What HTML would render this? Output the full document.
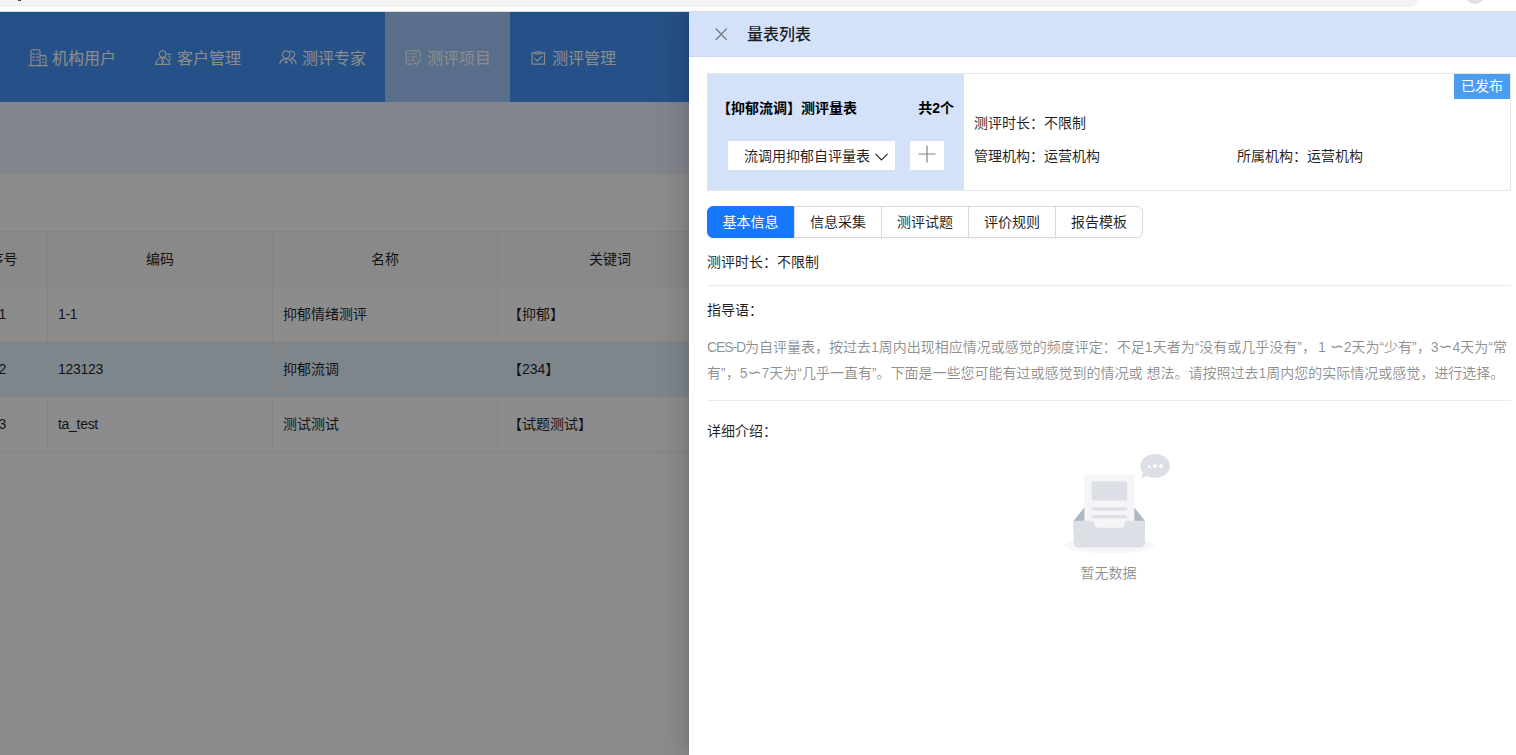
<!DOCTYPE html>
<html lang="zh-CN">
<head>
<meta charset="utf-8">
<title>量表列表</title>
<style>
*{box-sizing:border-box;margin:0;padding:0}
html,body{width:1516px;height:755px;overflow:hidden;background:#fff}
body{position:relative;font-family:"Liberation Sans","Noto Sans CJK SC",sans-serif;font-size:14px;color:rgba(0,0,0,.88)}
.abs{position:absolute}
/* browser chrome strip */
#chrome{left:0;top:0;width:1516px;height:12px;background:#fff;z-index:30;overflow:hidden}
#chrome .ln{left:0;top:11px;width:1516px;height:1px;background:#d9dcdf}
#chrome .pill{left:-20px;top:-21.1px;width:1441.5px;height:28px;background:#f1f3f4;border-radius:14px}
#chrome .ava{left:1464.7px;top:-16.6px;width:20.6px;height:20.6px;border-radius:50%;background:#dee1e6}
#chrome .dot{left:17.5px;top:0;width:3px;height:1px;background:#444}
/* underlying page */
#page{left:0;top:12px;width:1516px;height:743px;background:#fff;z-index:1}
#nav{left:0;top:0;width:1516px;height:90px;background:#4594f8}
.ni{top:0;width:125px;height:90px;color:#fff;font-size:16px;line-height:90px;white-space:nowrap}
.ni.on{background:#a3c9fd}
.ni svg{position:absolute;top:36px}
.ni span{position:absolute;top:2px}
#band{left:0;top:90px;width:1516px;height:72px;background:#eef3ff}
#tbl{left:-41px;top:219px;width:1600px;border-top:1px solid #f0f0f0}
.tr{position:relative;height:55px;border-bottom:1px solid #f0f0f0;width:100%}
.tr.h{background:#fafafa}
.tr.sel{background:#e6f4ff}
.td{position:absolute;top:0;height:54px;line-height:54px;border-left:1px solid #f0f0f0;padding-left:10px;white-space:nowrap;font-size:14px}
.lat{letter-spacing:-.3px}
.tl{font-family:"DejaVu Sans",sans-serif;font-size:16.7px;line-height:1}
.td.n{text-align:center;padding:0 2px 0 0}
.tr.h .td{text-align:center;padding-left:0}
#mask{left:0;top:12px;width:1516px;height:743px;background:rgba(0,0,0,.45);z-index:5}
/* drawer */
#drawer{left:689px;top:12px;width:827px;height:743px;background:#fff;z-index:10;box-shadow:-6px 0 16px 0 rgba(0,0,0,.08),-3px 0 6px -4px rgba(0,0,0,.12),-9px 0 28px 8px rgba(0,0,0,.05)}
#dh{left:0;top:0;width:827px;height:45px;background:#d4e2f9;border-bottom:1px solid #c9d6ec}
#dh .t{left:58px;top:1px;line-height:44px;font-size:16px;font-weight:500;color:rgba(0,0,0,.88)}

#dh .x{left:25.5px;top:15.5px;width:12.5px;height:12.5px}
/* card */
#card{left:18px;top:61px;width:804px;height:118px;background:#fff}
#cr{left:0;top:0;width:804px;height:118px;border:1px solid #e6e6e6}
#cl{left:1px;top:1px;width:256px;height:116px;background:#d4e2f9}
#cl .tt{left:9px;top:23px;font-size:14px;font-weight:700;line-height:22px;white-space:nowrap;color:#000}
#cl .cnt{right:10px;top:23px;font-size:14px;font-weight:700;line-height:22px;white-space:nowrap;color:#000}
#sel{left:20px;top:67px;width:167px;height:29px;background:#fff}
#sel span{position:absolute;left:16px;top:1px;line-height:29px;font-size:14px;white-space:nowrap;color:rgba(0,0,0,.88)}
#sel svg{position:absolute;left:147px;top:11.5px}
#plus{left:202px;top:67px;width:34px;height:29px;background:#fff}
#plus svg{position:absolute;left:8px;top:4px}
.info{font-size:14px;line-height:22px;white-space:nowrap;color:rgba(0,0,0,.88)}
#badge{left:747px;top:1px;width:56px;height:25px;background:#4a9eed;color:#fff;font-size:14px;line-height:25px;text-align:center}
/* tabs */
#tabs{left:18px;top:194px;height:32px;width:436px}
.tb{box-shadow:0 2px 0 rgba(0,0,0,.02)}
.tb{top:0;width:88px;height:32px;border:1px solid #d9d9d9;margin-left:-1px;background:#fff;text-align:center;line-height:30px;font-size:14px;color:rgba(0,0,0,.88)}
.tb.on{width:87px;background:#1677ff;border-color:#1677ff;color:#fff;border-radius:6px 0 0 6px;z-index:2}
.tb.last{border-radius:0 6px 6px 0}
.hr{left:18px;width:804px;height:1px;background:#ebebeb}
.lbl{left:18px;font-size:14px;line-height:22px;white-space:nowrap;color:rgba(0,0,0,.88)}
.para{left:18px;font-size:14px;line-height:26px;white-space:nowrap;color:rgba(0,0,0,.45)}
#empty{left:360px;top:442px;width:121px;height:100px}
#emptyt{left:0;top:550px;width:839px;text-align:center;font-size:14px;line-height:22px;color:rgba(0,0,0,.45)}
</style>
</head>
<body>
<div id="chrome" class="abs"><div class="pill abs"></div><div class="ava abs"></div><div class="dot abs"></div><div class="ln abs"></div></div>

<div id="page" class="abs">
  <div id="nav" class="abs">
    <div class="ni abs" style="left:10px"><span style="left:42px">机构用户</span></div>
    <div class="ni abs" style="left:135px"><span style="left:42px">客户管理</span></div>
    <div class="ni abs" style="left:260px"><span style="left:42px">测评专家</span></div>
    <div class="ni abs on" style="left:385px"><span style="left:42px">测评项目</span></div>
    <div class="ni abs" style="left:510px"><span style="left:42px">测评管理</span></div>
    <svg class="abs" style="left:0;top:0" width="700" height="90" viewBox="0 12 700 90" fill="none" stroke="#fff" stroke-width="1.15" stroke-linecap="round" stroke-linejoin="round">
      <!-- building -->
      <path d="M28.7 65.6H47.6M31 65.6V51.3a1.6 1.6 0 0 1 1.6-1.6h5.8a1.6 1.6 0 0 1 1.6 1.6V65.6M40 55.6h4.4a1.6 1.6 0 0 1 1.6 1.6V65.6"/>
      <path d="M32.1 54h2.9M36.1 54h2.8M32.1 57.1h2.9M36.1 57.1h2.8M32.1 60.2h2.9M36.1 60.2h2.8M42 59.1h2.2M42 62.2h2.2" stroke-width="1.15" stroke-linecap="butt"/>
      <!-- user with lines -->
      <circle cx="162.6" cy="54" r="3.3"/>
      <path d="M155.7 64.4H169.7C169.3 60.6 166.6 57.6 162.6 57.6S156 60.6 155.7 64.4zM162.6 57.6V60.2M162.6 62.6V64.2"/>
      <circle cx="162.6" cy="61.4" r="1.1" stroke-width="0.9"/>
      <path d="M166.9 54.4H171M168 57H171M168.8 59.6H171" stroke-width="1.1" stroke-linecap="butt"/>
      <!-- two users -->
      <circle cx="286.2" cy="54.6" r="3.7"/>
      <path d="M279.8 64C280.2 61 282.7 58.9 286.2 58.9S291.8 61 292.2 64"/>
      <path d="M286.2 60.7L287.6 62.1L286.2 63.5L284.8 62.1Z" fill="#fff" stroke-width="0.5"/>
      <path d="M289.7 51.3A3.55 3.55 0 1 1 290.9 58.1M291.4 58.9C294 59.4 295.8 61.3 296.1 64"/>
      <!-- doc with check -->
      <path d="M412.2 64.2H407.8a1.7 1.7 0 0 1-1.7-1.7V52.4a1.7 1.7 0 0 1 1.7-1.7H418.5a1.7 1.7 0 0 1 1.7 1.7V56.2M414.3 62.8L416.9 64.4L420.7 59.4"/>
      <path d="M408.2 53.8h1.3M411.1 53.8H416.9M408.2 57h1.3M411.1 57H416.9M408.2 60.1h1.3M411.1 60.1H414.8" stroke-width="1.1" stroke-linecap="butt"/>
      <!-- clipboard check -->
      <path d="M534.8 52.9H532.1V64.2H544.5V52.9H541.8M536.1 51.8H540.5a1 1 0 0 1 0 2H536.1a1 1 0 0 1 0-2zM534.8 58.4L537.4 61.2L541.7 56.5"/>
    </svg>
  </div>
  <div id="band" class="abs"></div>
  <div id="tbl" class="abs">
    <div class="tr h"><div class="td" style="left:0;width:88px">序号</div><div class="td" style="left:88px;width:225px">编码</div><div class="td" style="left:313px;width:225px">名称</div><div class="td" style="left:538px;width:225px">关键词</div></div>
    <div class="tr"><div class="td n" style="left:0;width:88px">1</div><div class="td" style="left:88px;width:225px"><span class="lat">1-1</span></div><div class="td" style="left:313px;width:225px">抑郁情绪测评</div><div class="td" style="left:538px;width:225px">【抑郁】</div></div>
    <div class="tr sel"><div class="td n" style="left:0;width:88px">2</div><div class="td" style="left:88px;width:225px"><span class="lat">123123</span></div><div class="td" style="left:313px;width:225px">抑郁流调</div><div class="td" style="left:538px;width:225px">【234】</div></div>
    <div class="tr"><div class="td n" style="left:0;width:88px">3</div><div class="td" style="left:88px;width:225px"><span class="lat">ta_test</span></div><div class="td" style="left:313px;width:225px">测试测试</div><div class="td" style="left:538px;width:225px">【试题测试】</div></div>
  </div>
</div>

<div id="mask" class="abs"></div>

<div id="drawer" class="abs">
  <div id="dh" class="abs">
    <svg class="x abs" viewBox="0 0 13 13"><path d="M0.7 0.5L12.3 12.5M12.3 0.5L0.7 12.5" stroke="#787d87" stroke-width="1.45" fill="none"/></svg>
    <div class="t abs">量表列表</div>
  </div>
  <div id="card" class="abs">
    <div id="cr" class="abs"></div>
    <div id="cl" class="abs">
      <div class="tt abs">【抑郁流调】测评量表</div>
      <div class="cnt abs">共2个</div>
      <div id="sel" class="abs"><span>流调用抑郁自评量表</span><svg width="13" height="8" viewBox="0 0 13 8"><path d="M0.5 0.8L6.5 7L12.5 0.8" stroke="#222" stroke-width="1.1" fill="none"/></svg></div>
      <div id="plus" class="abs"><svg width="18" height="18" viewBox="0 0 18 18"><path d="M9 0.5V17.5M0.5 9H17.5" stroke="#808080" stroke-width="1.2" fill="none"/></svg></div>
    </div>
    <div class="info abs" style="left:267px;top:39px">测评时长：不限制</div>
    <div class="info abs" style="left:267px;top:72px">管理机构：运营机构</div>
    <div class="info abs" style="left:530px;top:72px">所属机构：运营机构</div>
    <div id="badge" class="abs">已发布</div>
  </div>
  <div id="tabs" class="abs">
    <div class="tb abs on" style="left:1px">基本信息</div>
    <div class="tb abs" style="left:88px">信息采集</div>
    <div class="tb abs" style="left:175px">测评试题</div>
    <div class="tb abs" style="left:262px">评价规则</div>
    <div class="tb abs last" style="left:349px">报告模板</div>
  </div>
  <div class="lbl abs" style="top:239px">测评时长：不限制</div>
  <div class="hr abs" style="top:273px"></div>
  <div class="lbl abs" style="top:287px">指导语：</div>
  <div class="para abs" style="top:321.5px"><span style="letter-spacing:-1.1px">CES-D</span>为自评量表，按过去1周内出现相应情况或感觉的频度评定：不足1天者为“没有或几乎没有”，<span style="margin-left:2px">1</span> <span class="tl">∽</span>2天为“少有”，3<span class="tl">∽</span>4天为“常</div>
  <div class="para abs" style="top:347.5px">有”，5<span class="tl">∽</span>7天为“几乎一直有”。下面是一些您可能有过或感觉到的情况或 想法。请按照过去1周内您的实际情况或感觉，进行选择。</div>
  <div class="hr abs" style="top:388px"></div>
  <div class="lbl abs" style="top:408px">详细介绍：</div>
  <svg id="empty" class="abs" viewBox="0 0 184 152"><defs><linearGradient id="lg1" x1="50%" y1="0%" x2="50%" y2="100%"><stop stop-color="#FFFFFF" offset="0%"/><stop stop-color="#DCE0E6" offset="100%"/></linearGradient></defs><g fill="none" fill-rule="evenodd"><g transform="translate(24 31.67)"><ellipse fill-opacity=".8" fill="#F5F5F7" cx="67.797" cy="106.89" rx="67.797" ry="12.668"/><path d="M122.034 69.674L98.109 40.229c-1.148-1.386-2.826-2.225-4.593-2.225h-51.44c-1.766 0-3.444.839-4.592 2.225L13.56 69.674v15.383h108.475V69.674z" fill="#AEB8C2"/><path d="M101.537 86.214L80.63 61.102c-1.001-1.207-2.507-1.867-4.048-1.867H31.724c-1.54 0-3.047.66-4.048 1.867L6.769 86.214v13.792h94.768V86.214z" fill="url(#lg1)" transform="translate(13.56)"/><path d="M33.83 0h67.933a4 4 0 0 1 4 4v93.344a4 4 0 0 1-4 4H33.83a4 4 0 0 1-4-4V4a4 4 0 0 1 4-4z" fill="#F5F5F7"/><path d="M42.678 9.953h50.237a2 2 0 0 1 2 2V36.91a2 2 0 0 1-2 2H42.678a2 2 0 0 1-2-2V11.953a2 2 0 0 1 2-2zM42.94 49.767h49.713a2.262 2.262 0 1 1 0 4.524H42.94a2.262 2.262 0 0 1 0-4.524zM42.94 61.53h49.713a2.262 2.262 0 1 1 0 4.525H42.94a2.262 2.262 0 0 1 0-4.525zM121.813 105.032c-.775 3.071-3.497 5.36-6.735 5.36H20.515c-3.238 0-5.96-2.29-6.734-5.36a7.309 7.309 0 0 1-.222-1.79V69.675h26.318c2.907 0 5.25 2.448 5.25 5.42v.04c0 2.971 2.37 5.37 5.277 5.37h34.785c2.907 0 5.277-2.421 5.277-5.393V75.1c0-2.972 2.343-5.426 5.25-5.426h26.318v33.569c0 .617-.077 1.216-.221 1.789z" fill="#DCE0E6"/></g><path d="M149.121 33.292l-6.83 2.65a1 1 0 0 1-1.317-1.23l1.937-6.207c-2.589-2.944-4.109-6.534-4.109-10.408C138.802 8.102 148.92 0 161.402 0 173.881 0 184 8.102 184 18.097c0 9.995-10.118 18.097-22.599 18.097-4.528 0-8.744-1.066-12.28-2.902z" fill="#DCE0E6"/><g transform="translate(149.65 15.383)" fill="#FFF"><ellipse cx="20.654" cy="3.167" rx="2.849" ry="2.815"/><path d="M5.698 5.63H0L2.898.704zM9.259.704h4.985V5.63H9.259z"/></g></g></svg>
  <div id="emptyt" class="abs">暂无数据</div>
</div>
</body>
</html>
